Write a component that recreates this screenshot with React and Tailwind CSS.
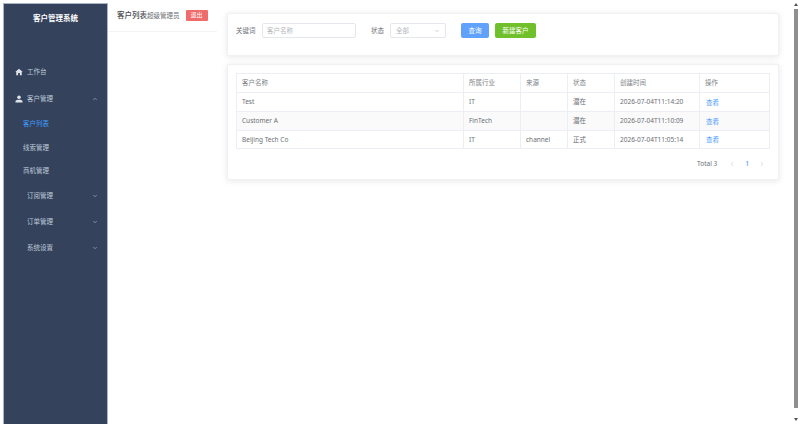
import { ChevronDown, ChevronUp, ChevronLeft, ChevronRight } from "lucide-react";

const font = { fontFamily: '"Noto Sans", "Noto Sans CJK SC", sans-serif' };

const rows = [
  { name: "Test", industry: "IT", source: "", status: "潜在", time: "2026-07-04T11:14:20" },
  { name: "Customer A", industry: "FinTech", source: "", status: "潜在", time: "2026-07-04T11:10:09" },
  { name: "Beijing Tech Co", industry: "IT", source: "channel", status: "正式", time: "2026-07-04T11:05:14" },
];

function HomeIcon() {
  return (
    <svg viewBox="0 0 16 16" className="h-[8px] w-[8px] shrink-0" fill="#dfe4ea">
      <path d="M8 1.5 15.5 8H13.5v6.5H9.8V10H6.2v4.5H2.5V8H.5z" />
    </svg>
  );
}

function UserIcon() {
  return (
    <svg viewBox="0 0 16 16" className="h-[8px] w-[8px] shrink-0" fill="#dfe4ea">
      <circle cx="8" cy="4.6" r="3.6" />
      <path d="M1 15v-2c0-2.4 2.4-3.6 7-3.6s7 1.2 7 3.6v2z" />
    </svg>
  );
}

function MenuItem({ icon, label, chevron, className = "" }) {
  return (
    <div className={`flex h-[26px] items-center pl-[11px] pr-[9px] text-[6.5px] text-[#bfcbd9] ${className}`}>
      <div className="flex w-[12px]">{icon}</div>
      <span className="flex-1">{label}</span>
      {chevron === "up" && <ChevronUp className="h-[6px] w-[6px] text-[#aab5c4]" strokeWidth={2.5} />}
      {chevron === "down" && <ChevronDown className="h-[6px] w-[6px] text-[#aab5c4]" strokeWidth={2.5} />}
    </div>
  );
}

function SubItem({ label, active }) {
  return (
    <div className={`flex h-[23.7px] items-center pl-[19px] text-[6.5px] ${active ? "text-[#409eff]" : "text-[#bfcbd9]"}`}>
      {label}
    </div>
  );
}

function Sidebar() {
  return (
    <aside className="mt-[3px] ml-[3px] flex w-[105px] shrink-0 flex-col border-x border-t border-[#aab4c4] bg-[#34425c]">
      <div className="flex h-[29px] items-center justify-center text-[7.5px] font-semibold text-white">客户管理系统</div>
      <div className="mt-[26px] flex flex-col">
        <MenuItem icon={<HomeIcon />} label="工作台" className="mb-[1px]" />
        <MenuItem icon={<UserIcon />} label="客户管理" chevron="up" />
        <SubItem label="客户列表" active />
        <SubItem label="线索管理" />
        <SubItem label="商机管理" />
        <MenuItem label="订阅管理" chevron="down" />
        <MenuItem label="订单管理" chevron="down" />
        <MenuItem label="系统设置" chevron="down" />
      </div>
    </aside>
  );
}

function Scrollbar() {
  return (
    <div className="flex w-[6px] shrink-0 flex-col pr-[2px]">
      <div className="flex h-[9px] items-center justify-center">
        <div className="h-0 w-0 border-x-[2px] border-b-[3px] border-x-transparent border-b-[#505050]" />
      </div>
      <div className="h-[399px] w-full bg-[#8f8f8f]" />
      <div className="flex flex-1 items-center justify-center pt-[6px]">
        <div className="h-0 w-0 border-x-[2px] border-t-[3px] border-x-transparent border-t-[#505050]" />
      </div>
    </div>
  );
}

function Cell({ w, children, last, className = "pl-[5px]" }) {
  return (
    <div className={`flex h-full shrink-0 items-center ${last ? "" : "border-r border-[#ebeef5]"} ${className}`} style={{ width: w }}>
      {children}
    </div>
  );
}

const widths = [227, 57, 47, 47, 85, 69];

function CustomerTable() {
  const head = ["客户名称", "所属行业", "来源", "状态", "创建时间", "操作"];
  return (
    <div className="border border-[#ebeef5] text-[6.5px] text-[#6b6e74]">
      <div className="flex h-[19px] border-b border-[#ebeef5] text-[#7c7f86]">
        {head.map((h, i) => (
          <Cell key={h} w={widths[i]} last={i === 5}>{h}</Cell>
        ))}
      </div>
      {rows.map((r, i) => (
        <div key={r.name} className={`flex h-[19px] border-b border-[#ebeef5] last:h-[17px] last:border-b-0 ${i === 1 ? "bg-[#fafafa]" : ""}`}>
          <Cell w={widths[0]}>{r.name}</Cell>
          <Cell w={widths[1]}>{r.industry}</Cell>
          <Cell w={widths[2]}>{r.source}</Cell>
          <Cell w={widths[3]}>{r.status}</Cell>
          <Cell w={widths[4]}>{r.time}</Cell>
          <Cell w={widths[5]} last className="pl-[6px] pt-[1px] text-[#4f9dfa]">查看</Cell>
        </div>
      ))}
    </div>
  );
}

export default function App() {
  return (
    <div className="flex h-[424px] w-[800px] overflow-hidden bg-white" style={font}>
      <Sidebar />

      <div className="w-[109px] shrink-0">
        <div className="flex h-[32px] items-center border-b border-[#f4f4f5] pl-[9px] pb-[4px] pt-[4px]">
          <span className="text-[7.5px] font-medium text-[#484a50]">客户列表</span>
          <span className="text-[6.5px] text-[#6b6e74]">超级管理员</span>
          <button className="ml-[6px] h-[11px] w-[22px] rounded-[1px] bg-[#f06b6b] text-[6px] text-white">退出</button>
        </div>
      </div>

      <main className="w-[577px] shrink-0 pl-[10px] pr-[15px] pt-[13px]">
        <section className="h-[43px] rounded-[2px] border border-[#f0f1f3] bg-white px-[8px] pt-[9px] shadow-[0_1px_6px_rgba(0,0,0,0.1)]">
          <div className="flex items-center text-[6.5px] text-[#6b6e74]">
            <span className="w-[20px]">关键词</span>
            <div className="ml-[6px] flex h-[15px] w-[94px] items-center rounded-[2px] border border-[#e4e7ed] pl-[4px] text-[#b4b7bd]">客户名称</div>
            <span className="ml-[15px] w-[13px]">状态</span>
            <div className="ml-[6px] flex h-[15px] w-[56px] items-center justify-between rounded-[2px] border border-[#e4e7ed] pl-[5px] pr-[5px] text-[#b4b7bd]">
              全部
              <ChevronDown className="h-[6px] w-[6px]" strokeWidth={2.5} />
            </div>
            <button className="ml-[15px] h-[15px] w-[28px] rounded-[2px] bg-[#60a2fb] text-white">查询</button>
            <button className="ml-[6px] h-[15px] w-[41px] rounded-[2px] bg-[#70c02c] text-white">新建客户</button>
          </div>
        </section>

        <section className="mt-[8px] h-[116px] rounded-[2px] border border-[#f0f1f3] bg-white px-[8px] pt-[8px] shadow-[0_1px_6px_rgba(0,0,0,0.1)]">
          <CustomerTable />
          <div className="mt-[10px] flex h-[10px] items-center justify-end pr-[5px] text-[6.5px] text-[#6b6e74]">
            <span>Total 3</span>
            <ChevronLeft className="ml-[12px] h-[6px] w-[6px] text-[#c0c4cc]" strokeWidth={2.5} />
            <span className="mx-[10px] font-medium text-[#4f9dfa]">1</span>
            <ChevronRight className="h-[6px] w-[6px] text-[#c0c4cc]" strokeWidth={2.5} />
          </div>
        </section>
      </main>

      <Scrollbar />
    </div>
  );
}
